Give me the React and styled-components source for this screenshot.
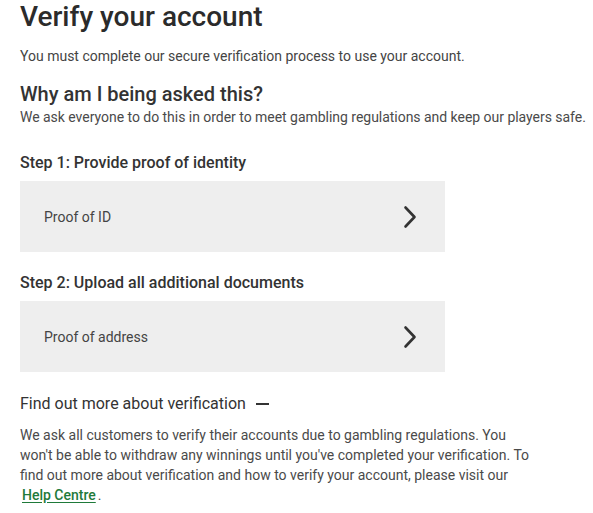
import React from 'react'
import styled, { createGlobalStyle } from 'styled-components'

const GlobalStyle = createGlobalStyle`
  html, body {
    margin: 0;
    padding: 0;
    background: #ffffff;
  }
  body {
    font-family: Roboto, 'Liberation Sans', Arial, sans-serif;
    color: #333333;
  }
`

const Root = styled.div`
  padding: 0 20px;
  width: 593px;
  box-sizing: border-box;
`

const Title = styled.h1`
  margin: 0;
  font-size: 28px;
  line-height: 34px;
  font-weight: 500;
  color: #2b2b2b;
`

const Text = styled.p`
  margin: ${(p) => p.$margin || '0'};
  max-width: ${(p) => p.$maxWidth || 'none'};
  font-size: 14px;
  line-height: 20px;
  font-weight: 400;
  color: ${(p) => (p.$soft ? '#4a4a4a' : '#444444')};
  white-space: ${(p) => (p.$nowrap ? 'nowrap' : 'normal')};
  letter-spacing: ${(p) => (p.$nowrap ? '-0.03px' : 'normal')};
`

const SubTitle = styled.h2`
  margin: 15px 0 0;
  font-size: 20px;
  line-height: 26px;
  font-weight: 500;
  color: #333333;
`

const StepTitle = styled.h3`
  margin: ${(p) => p.$margin || '0'};
  font-size: 16px;
  line-height: 22px;
  font-weight: 500;
  color: #333333;
`

const Card = styled.button`
  display: flex;
  align-items: center;
  justify-content: space-between;
  width: 425px;
  height: 71px;
  margin-top: 7px;
  padding: 0 28px 0 24px;
  border: none;
  background: #eeeeee;
  font-family: inherit;
  font-size: 14px;
  color: #444444;
  cursor: pointer;
  box-sizing: border-box;
  text-align: left;
`

const MoreTitle = styled.div`
  display: flex;
  align-items: center;
  gap: 10px;
  margin-top: 21px;
  font-size: 16px;
  line-height: 22px;
  font-weight: 400;
  color: #333333;
`

const Dash = styled.span`
  display: inline-block;
  width: 13px;
  height: 2px;
  background: #333333;
`

const HelpLink = styled.a`
  color: #1f7a3a;
  font-weight: 500;
  text-decoration: underline;
  text-underline-offset: 2px;
  margin-left: 2px;
  margin-right: 2px;
`

function Chevron() {
  return (
    <svg width="14" height="24" viewBox="0 0 14 24" fill="none">
      <path
        d="M2.5 2.5 L11.5 12 L2.5 21.5"
        stroke="#333333"
        strokeWidth="2.6"
        strokeLinecap="round"
        strokeLinejoin="round"
      />
    </svg>
  )
}

function DocCard({ label }) {
  return (
    <Card>
      <span>{label}</span>
      <Chevron />
    </Card>
  )
}

export default function App() {
  return (
    <>
      <GlobalStyle />
      <Root>
        <Title>Verify your account</Title>
        <Text $margin="12px 0 0">
          You must complete our secure verification process to use your account.
        </Text>
        <SubTitle>Why am I being asked this?</SubTitle>
        <Text $soft $nowrap>
          We ask everyone to do this in order to meet gambling regulations and keep our players safe.
        </Text>

        <StepTitle $margin="25px 0 0">Step 1: Provide proof of identity</StepTitle>
        <DocCard label="Proof of ID" />

        <StepTitle $margin="20px 0 0">Step 2: Upload all additional documents</StepTitle>
        <DocCard label="Proof of address" />

        <MoreTitle>
          Find out more about verification <Dash />
        </MoreTitle>
        <Text $soft $margin="10px 0 0" $maxWidth="515px">
          We ask all customers to verify their accounts due to gambling regulations. You
          won't be able to withdraw any winnings until you've completed your verification. To
          find out more about verification and how to verify your account, please visit our
          <br />
          <HelpLink href="#">Help Centre</HelpLink>.
        </Text>
      </Root>
    </>
  )
}
